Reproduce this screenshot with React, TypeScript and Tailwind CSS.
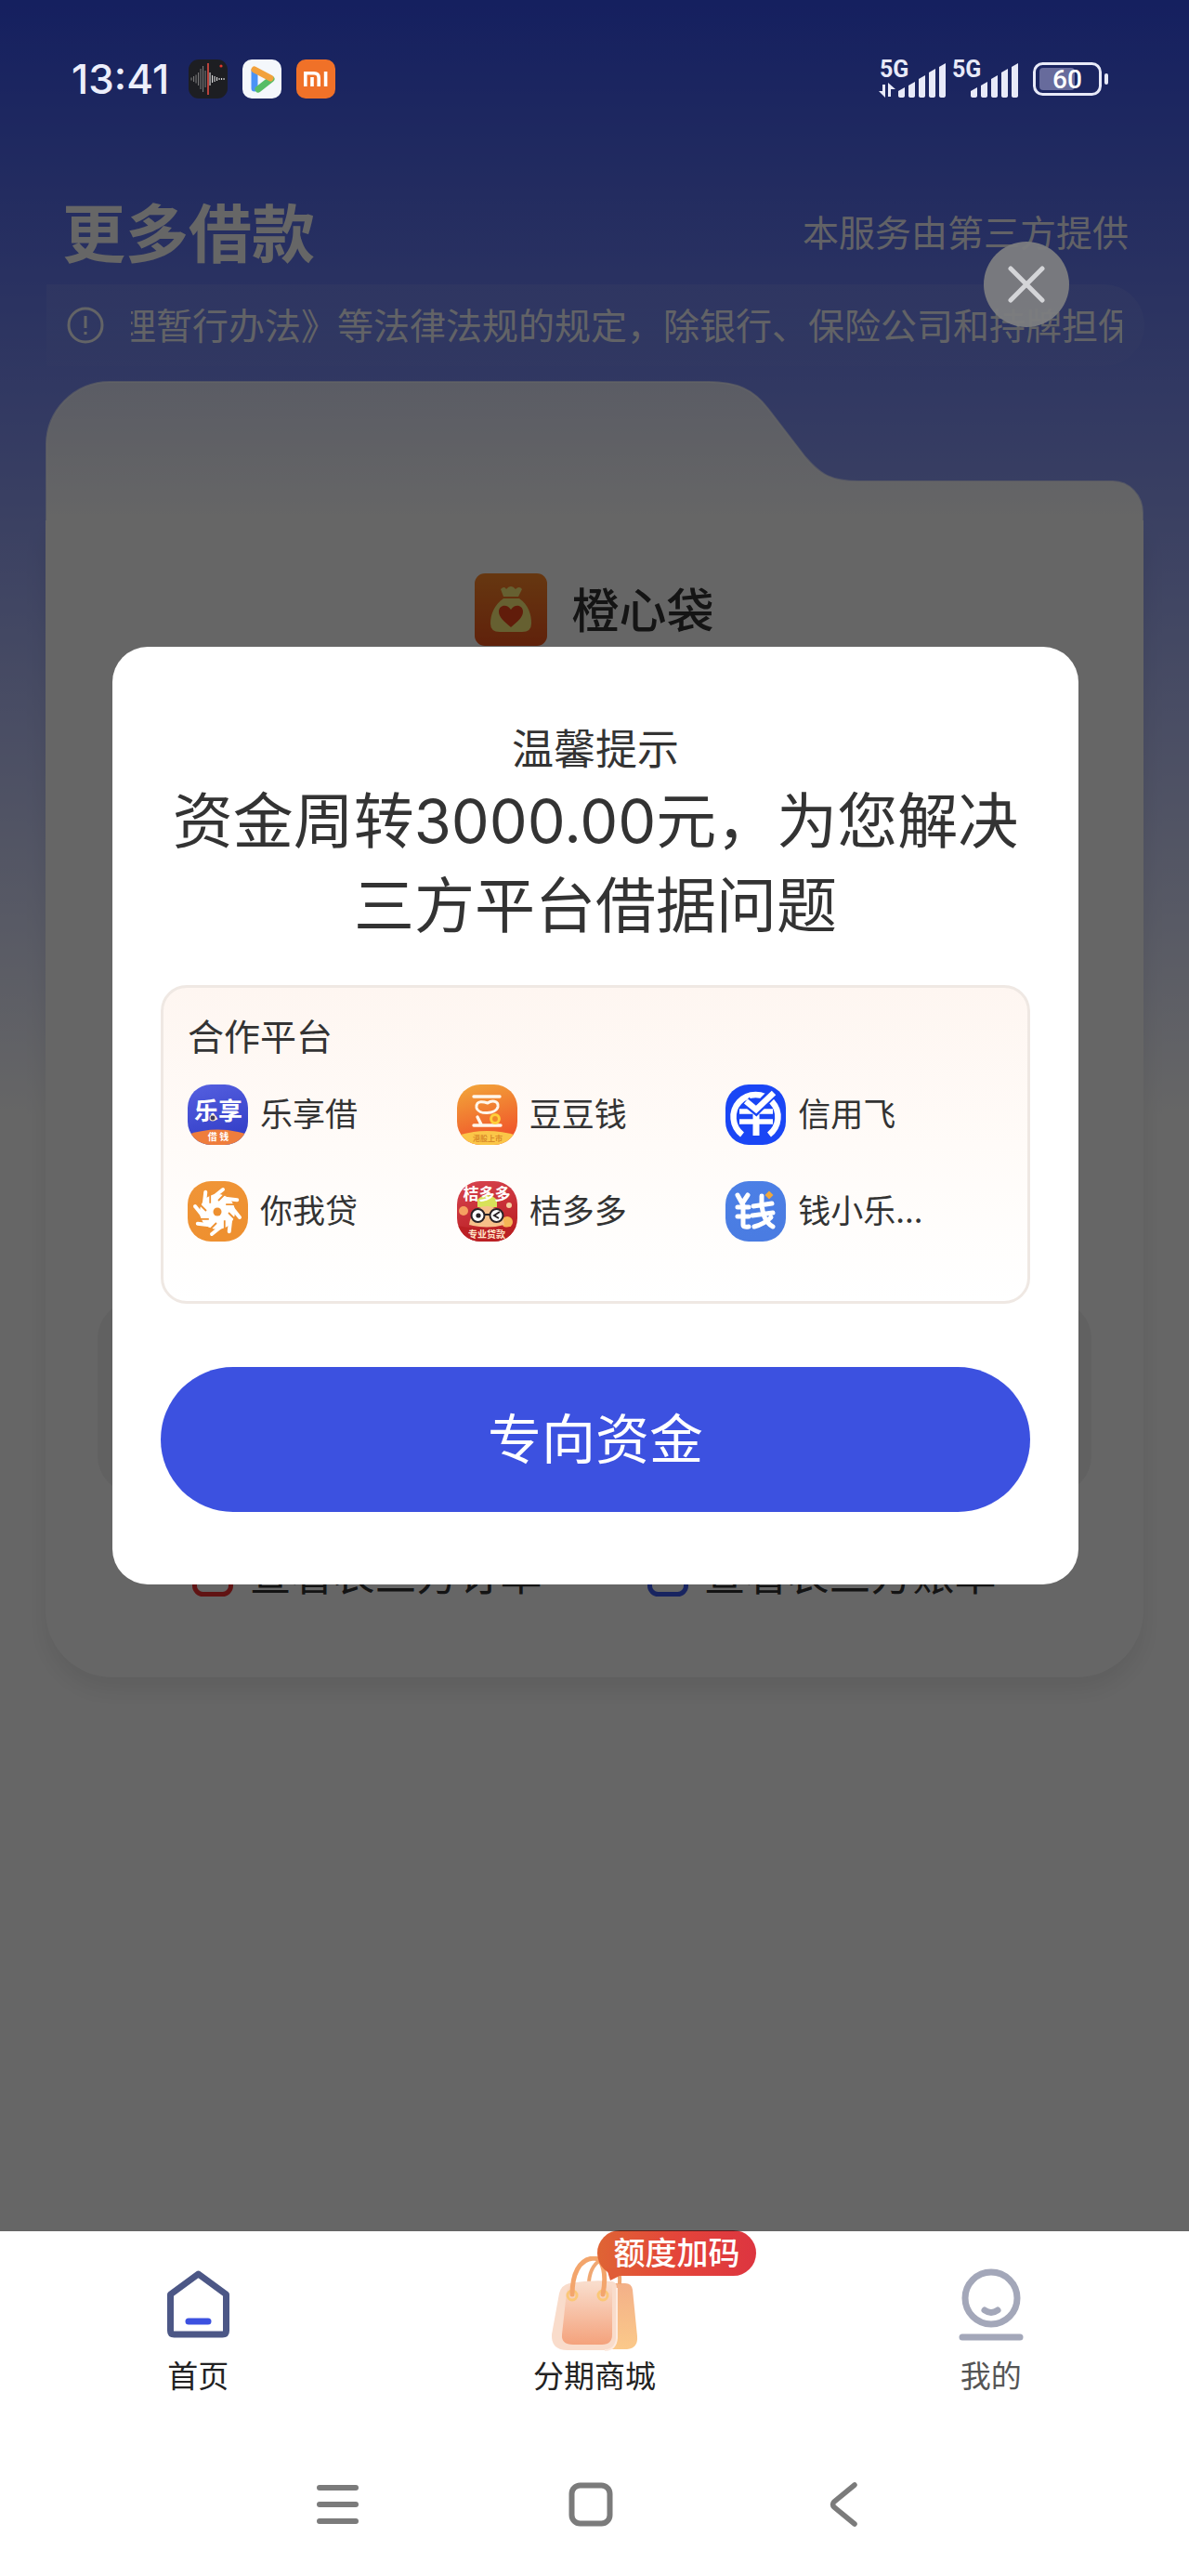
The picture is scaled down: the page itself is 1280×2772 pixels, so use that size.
import type { ReactNode } from "react";

const svgFont = "'Noto Sans CJK SC', sans-serif";

function RecorderIcon() {
  const bars = [3, 6, 9, 14, 22, 28, 18, 26, 14, 8, 6, 4, 2, 2, 2];
  return (
    <svg viewBox="0 0 42 42" className="size-[42px]">
      <rect width="42" height="42" rx="11" fill="#1d1e22" />
      {bars.map((h, i) => (
        <rect key={i} x={2.5 + i * 2.5} y={21 - h / 2} width="1.1" height={h} fill={i < 8 ? "#777" : "#ddd"} />
      ))}
      <rect x="20" y="4" width="2" height="34" fill="#b8423c" />
      <circle cx="35" cy="7" r="1.6" fill="#e0382e" />
    </svg>
  );
}

function PlayerIcon() {
  return (
    <svg viewBox="0 0 42 42" className="size-[42px]">
      <rect width="42" height="42" rx="10" fill="#f4f7fb" />
      <g fill="none" strokeWidth="7" strokeLinecap="round" strokeLinejoin="round">
        <path d="M13 31V12" stroke="#4a93f5" />
        <path d="M17 32L31 21" stroke="#57bd66" />
        <path d="M13 11L30 20" stroke="#f2a13c" />
      </g>
    </svg>
  );
}

function MiIcon() {
  return (
    <svg viewBox="0 0 42 42" className="size-[42px]">
      <rect width="42" height="42" rx="10" fill="#f07128" />
      <g fill="none" stroke="#fff" strokeWidth="3.6">
        <path d="M9.8 29V14.8H19Q24.2 14.8 24.2 20V29" />
        <path d="M17 19V29M31.6 13V29" />
      </g>
    </svg>
  );
}

function Signal({ data }: { data?: boolean }) {
  return (
    <svg viewBox="0 0 74 42" className="h-[42px] w-[74px] overflow-visible" fill="#e8eaf8">
      <text x="1" y="19" fontSize="25" fontWeight="700" fontFamily="Roboto, sans-serif">5G</text>
      {data && <path d="M4 27h3v14l-7-7h4zM10 40h3v-8h5l-8-7z" />}
      {[9, 15, 22, 29, 35].map((h, i) => (
        <path key={h} d={`M${21 + i * 11} 39V${43 - h}l7 -4V39q0 2-3 2h-1q-3 0-3-2z`} />
      ))}
    </svg>
  );
}

function Battery() {
  return (
    <svg viewBox="0 0 82 38" className="h-[38px] w-[82px]">
      <rect x="1.5" y="2.5" width="71" height="33" rx="9" fill="none" stroke="#e8eaf8" strokeWidth="3" />
      <rect x="7" y="7" width="38" height="24" rx="4" fill="#676b9c" />
      <rect x="77" y="13" width="4" height="12" rx="2" fill="#e8eaf8" />
      <text x="37" y="29" textAnchor="middle" fontSize="28" fontWeight="500" fill="#fff" fontFamily="Roboto, sans-serif">60</text>
    </svg>
  );
}

function StatusBar() {
  return (
    <div className="relative z-20 flex h-[170px] items-center justify-between pr-[86px] pl-[77px]">
      <div className="flex items-center gap-4">
        <span className="mr-[5px] font-['Inter','Noto_Sans_CJK_SC',sans-serif] text-[44px] leading-[50px] font-medium text-[#eceefb]">
          13:41
        </span>
        <RecorderIcon />
        <PlayerIcon />
        <MiIcon />
      </div>
      <div className="flex items-center">
        <Signal data />
        <span className="w-1" />
        <Signal />
        <span className="w-[14px]" />
        <Battery />
      </div>
    </div>
  );
}

function MoneyBag() {
  return (
    <svg viewBox="0 0 78 78" className="size-[78px]">
      <defs>
        <linearGradient id="bagBg" x1="0" y1="0" x2="0" y2="1">
          <stop offset="0" stopColor="#ff8a2a" />
          <stop offset="1" stopColor="#f0541c" />
        </linearGradient>
      </defs>
      <rect width="78" height="78" rx="11" fill="url(#bagBg)" />
      <path d="M28 17q4-4 6 0q5-6 10 0q4-4 7 0l-4 8H31z" fill="#fff07a" />
      <path d="M31 27H48C58 34 61 44 61 54Q61 63 51 63H27Q17 63 17 54C17 44 21 34 31 27z" fill="#fff07a" />
      <path d="M39 58C31 51 26 47 26 41C26 34 35 32 39 39C43 32 52 34 52 41C52 47 47 51 39 58z" fill="#f2461a" />
    </svg>
  );
}

function DocIcon({ className }: { className: string }) {
  return (
    <svg viewBox="0 0 44 50" className={`h-[50px] w-[44px] ${className}`} fill="none" stroke="currentColor" strokeWidth="5">
      <rect x="2.5" y="2.5" width="39" height="45" rx="9" />
      <path d="M13 17h18M13 28h12" />
    </svg>
  );
}

function LoanCard() {
  return (
    <section className="mx-[49px] mt-4">
      <svg viewBox="0 0 1182 150" preserveAspectRatio="none" className="block h-[150px] w-full">
        <defs>
          <linearGradient id="tabFill" x1="0" y1="0" x2="0" y2="1">
            <stop offset="0" stopColor="#e2e6fb" />
            <stop offset="1" stopColor="#ffffff" />
          </linearGradient>
        </defs>
        <path
          d="M1 150V70A68 68 0 0 1 69 1H714C744 1 762 9 778 30L818 82C834 101 846 108 876 108H1149A32 34 0 0 1 1181 142V150"
          fill="url(#tabFill)"
          stroke="#fff"
          strokeOpacity=".6"
          strokeWidth="2"
        />
      </svg>
      <div className="rounded-b-[72px] bg-white px-14 pt-[57px] pb-[82px] shadow-[0_14px_24px_rgba(0,0,0,0.08)]">
        <div className="flex items-center justify-center gap-[26px]">
          <MoneyBag />
          <h2 className="pb-1 text-[51px] leading-[74px] font-medium text-[#333]">橙心袋</h2>
        </div>
        <div className="mt-[705px] h-[207px] rounded-[40px] bg-[#f3f3f3]" />
        <div className="mt-14 flex justify-center gap-[113px]">
          <a href="#orders" className="flex items-center gap-[17px] text-[45px] leading-[60px] text-[#333]">
            <DocIcon className="text-[#f03030]" />
            查看表三方订单
          </a>
          <a href="#bills" className="flex items-center gap-[17px] text-[45px] leading-[60px] text-[#333]">
            <DocIcon className="text-[#3d5bf0]" />
            查看表三方账单
          </a>
        </div>
      </div>
    </section>
  );
}

function LogoFrame({ id, from, to, children }: { id: string; from: string; to: string; children: ReactNode }) {
  return (
    <svg viewBox="0 0 65 65" className="size-[65px] shrink-0">
      <defs>
        <linearGradient id={`${id}Bg`} x1="0" y1="0" x2="0.3" y2="1">
          <stop offset="0" stopColor={from} />
          <stop offset="1" stopColor={to} />
        </linearGradient>
        <clipPath id={`${id}Clip`}>
          <rect width="65" height="65" rx="25" />
        </clipPath>
      </defs>
      <g clipPath={`url(#${id}Clip)`} fontFamily={svgFont}>
        <rect width="65" height="65" fill={`url(#${id}Bg)`} />
        {children}
      </g>
    </svg>
  );
}

const partners: { name: string; logo: ReactNode }[] = [
  {
    name: "乐享借",
    logo: (
      <LogoFrame id="lexiang" from="#5560e0" to="#343fc8">
        <text x="33" y="38" textAnchor="middle" fontSize="26" fontWeight="700" fill="#fff">乐享</text>
        <circle cx="27" cy="36" r="3" fill="#3a3a60" stroke="#e8d8c0" strokeWidth="1.2" />
        <path d="M0 54Q32 43 65 54V65H0z" fill="#ef7d3c" />
        <text x="33" y="60" textAnchor="middle" fontSize="10" fontWeight="700" fill="#fff">借 钱</text>
      </LogoFrame>
    ),
  },
  {
    name: "豆豆钱",
    logo: (
      <LogoFrame id="doudou" from="#f2a83a" to="#f0562a">
        <g fill="none" stroke="#fff6ea" strokeWidth="3.4" strokeLinecap="round" strokeLinejoin="round">
          <path d="M18 13H46M18 44H47M22 35L26 43" />
          <path d="M21 25C20 16 30 19 33 20C37 17 45 17 44 24C42 32 23 33 21 25z" strokeWidth="3" />
        </g>
        <circle cx="41" cy="37" r="4.4" fill="#f08a2a" stroke="#ffcf3a" strokeWidth="3" />
        <path d="M0 55Q32 45 65 55V65H0z" fill="#fbc648" />
        <text x="33" y="61" textAnchor="middle" fontSize="8" fontWeight="700" fill="#d98a2a">港股上市</text>
      </LogoFrame>
    ),
  },
  {
    name: "信用飞",
    logo: (
      <LogoFrame id="xinyong" from="#1a46f5" to="#1a46f5">
        <path d="M18 54A24 24 0 1 1 47 54" fill="none" stroke="#fff" strokeWidth="6.5" />
        <g stroke="#fff" strokeWidth="5.6" fill="none">
          <path d="M15 29H51M15 40H51" />
          <path d="M33 30V55" strokeWidth="7" />
        </g>
        <path d="M22 18L33 27L51 9" fill="none" stroke="#1a46f5" strokeWidth="11" />
        <path d="M22 18L33 27L52 9" fill="none" stroke="#fff" strokeWidth="6.5" />
      </LogoFrame>
    ),
  },
  {
    name: "你我贷",
    logo: (
      <LogoFrame id="niwo" from="#f09537" to="#ee9030">
        <circle cx="32" cy="33" r="19" fill="#fff" />
        {[0, 45, 90, 135, 180, 225, 270, 315].map((deg) => (
          <g key={deg} transform={`rotate(${deg} 32 33)`}>
            <path d="M28 17L38 9" stroke="#fff" strokeWidth="4" strokeLinecap="round" />
            <path d="M33 21L42 12" stroke="#ee9030" strokeWidth="1.8" />
          </g>
        ))}
        <circle cx="32" cy="33" r="4.5" fill="#ee9030" />
      </LogoFrame>
    ),
  },
  {
    name: "桔多多",
    logo: (
      <LogoFrame id="judd" from="#d84450" to="#bb2024">
        <path d="M22 20Q32 10 43 20V28H22z" fill="#d8e25a" />
        <circle cx="7" cy="32" r="5" fill="#f5a060" />
        <circle cx="54" cy="44" r="6" fill="#f5b455" />
        <circle cx="56" cy="26" r="3" fill="#f5d0a0" />
        <path d="M13 47Q16 27 32 27Q48 27 51 47Q32 52 13 47z" fill="#f7c08a" />
        <text x="32" y="20" textAnchor="middle" fontSize="17" fontWeight="700" fill="#fff">桔多多</text>
        <g fill="#fff" stroke="#2a2226" strokeWidth="2">
          <circle cx="22.500" cy="37" r="7" />
          <circle cx="42.500" cy="37" r="7" />
          <path d="M29 36H36" />
          <path d="M46 33L40 37L45 40" fill="none" />
        </g>
        <circle cx="23" cy="37" r="2.6" fill="#2a2226" />
        <path d="M0 48Q32 54 65 48V65H0z" fill="#bb2024" />
        <text x="32" y="61" textAnchor="middle" fontSize="10" fontWeight="700" fill="#ffe6c8">专业贷款</text>
      </LogoFrame>
    ),
  },
  {
    name: "钱小乐...",
    logo: (
      <LogoFrame id="qianxl" from="#4c80e6" to="#4a7ce2">
        <g fill="none" stroke="#fff" strokeWidth="5" strokeLinecap="round" strokeLinejoin="round">
          <path d="M13 15L18 24L24 15M13 28H25M13 38H25M19 26V47Q19 50 25 49" />
          <path d="M30 27L50 24M29 37L51 34M39 16Q38 42 51 49M49 39Q42 46 31 49" />
        </g>
        <path d="M47 10.500L51.500 15L47 19.500L42.500 15z" fill="#f0a83c" />
      </LogoFrame>
    ),
  },
];

function PromoDialog() {
  return (
    <div
      role="dialog"
      aria-labelledby="promo-title"
      className="mr-[119px] ml-[121px] flex-1 rounded-[38px] bg-white px-[52px] pt-[82px] pb-[78px] text-[#333]"
    >
      <h2 id="promo-title" className="text-center text-[45px] leading-[52px]">温馨提示</h2>
      <p className="mt-2 text-center font-['Inter','Noto_Sans_CJK_SC',sans-serif] text-[65px] leading-[91px]">
        资金周转3000.00元，为您解决
        <br />
        三方平台借据问题
      </p>
      <div className="mt-10 rounded-[28px] border-[3px] border-[#efe8e3] bg-linear-to-b/srgb from-[#fef6f1] via-[#fffbf8] to-white pt-6 pr-[35px] pb-16 pl-[26px]">
        <h3 className="text-[39px] leading-[52px]">合作平台</h3>
        <ul className="mt-7 grid grid-cols-3 gap-y-[39px]">
          {partners.map((p) => (
            <li key={p.name} className="flex items-center gap-[13px]">
              {p.logo}
              <span className="pb-[5px] text-[35px] leading-[52px]">{p.name}</span>
            </li>
          ))}
        </ul>
      </div>
      <button type="button" className="mt-[68px] h-[156px] w-full rounded-full bg-[#3c51e0] pb-[7px] text-[58px] text-white">
        专向资金
      </button>
    </div>
  );
}

function HomeIcon() {
  return (
    <svg viewBox="0 0 67 73" className="h-[73px] w-[67px]" fill="none" strokeLinecap="round" strokeLinejoin="round">
      <path d="M3.500 26L33.500 4L63.500 26V65Q63.500 69 59.500 69H7.500Q3.500 69 3.500 65z" stroke="#4c5786" strokeWidth="7" />
      <path d="M23 55H44" stroke="#3c51e0" strokeWidth="7" />
    </svg>
  );
}

function BagIcon() {
  return (
    <svg viewBox="0 0 94 103" className="h-[103px] w-[94px]">
      <defs>
        <linearGradient id="bagFront" x1="0" y1="0" x2="0" y2="1">
          <stop offset="0" stopColor="#f9dccb" />
          <stop offset="1" stopColor="#f4a27c" />
        </linearGradient>
        <linearGradient id="bagBack" x1="0" y1="0" x2="0" y2="1">
          <stop offset="0" stopColor="#f3b088" />
          <stop offset="1" stopColor="#fbc98a" />
        </linearGradient>
      </defs>
      <path d="M62 29H80Q87 29 88 36L93 86Q94 99 82 100H55z" fill="url(#bagBack)" />
      <path d="M41 27Q43 8 56 3M74 30Q75 18 71 10" fill="none" stroke="#f0a873" strokeWidth="4" />
      <path d="M20 29Q44 25 66 27Q71 28 71 34V88Q70 101 58 101H18Q0 101 1 84L9 40Q11 31 20 29z" fill="#f9dccb" />
      <path d="M22 31Q44 28 66 31V84Q66 95 55 95H24Q11 95 12 84L17 38Q18 32 22 31z" fill="url(#bagFront)" />
      <path d="M58 101Q70 101 71 88V34" fill="none" stroke="#fdeadf" strokeWidth="2" />
      <g fill="none" stroke="#fbc777" strokeWidth="3">
        <circle cx="23" cy="42" r="5" />
        <circle cx="56" cy="42" r="5" />
      </g>
      <path d="M23 41C23 20 30 3 46 2C57 2 60 20 56 41" fill="none" stroke="#f3a56c" strokeWidth="5" strokeLinecap="round" />
    </svg>
  );
}

function MeIcon() {
  return (
    <svg viewBox="0 0 70 78" className="h-[78px] w-[70px]" fill="none" stroke="#a3a7b9" strokeWidth="7" strokeLinecap="round">
      <circle cx="35" cy="32" r="28" />
      <path d="M28 45Q35 50 42 45" />
      <path d="M4 74H66" />
    </svg>
  );
}

function TabItem({ href, label, muted, children }: { href: string; label: string; muted?: boolean; children: ReactNode }) {
  return (
    <a href={href} className="flex flex-col items-center pt-[27px]">
      <span className="relative flex h-[103px] items-center">{children}</span>
      <span className={`mt-1 text-[33px] leading-[40px] ${muted ? "text-[#555]" : "text-[#222]"}`}>{label}</span>
    </a>
  );
}

function TabBar() {
  return (
    <nav className="grid grid-cols-3 bg-white pb-[43px]">
      <TabItem href="#home" label="首页">
        <HomeIcon />
      </TabItem>
      <TabItem href="#mall" label="分期商城">
        <BagIcon />
        <span className="absolute -top-7 left-[50px] flex h-[49px] w-[171px] items-center justify-center rounded-full bg-linear-to-r/srgb from-[#df6434] via-[#e4453a] to-[#dd3540] pb-[5px] text-[34px] font-medium whitespace-nowrap text-white">
          额度加码
          <svg viewBox="0 0 16 14" className="absolute top-[41px] left-[10px] h-[14px] w-4">
            <path d="M0 0H16V7L4 13z" fill="#e05c37" />
          </svg>
        </span>
      </TabItem>
      <TabItem href="#me" label="我的" muted>
        <MeIcon />
      </TabItem>
    </nav>
  );
}

function SystemNav() {
  return (
    <div className="flex h-[154px] items-center justify-center gap-[224px] bg-white pr-2">
      <button type="button" aria-label="菜单">
        <svg viewBox="0 0 48 48" className="size-12" stroke="#7b7b7b" strokeWidth="6" strokeLinecap="round">
          <path d="M4 6H43M4 24H43M4 42H43" />
        </svg>
      </button>
      <button type="button" aria-label="主屏幕">
        <svg viewBox="0 0 48 48" className="size-12" fill="none" stroke="#7b7b7b" strokeWidth="6">
          <rect x="3.500" y="3.500" width="41" height="41" rx="9" />
        </svg>
      </button>
      <button type="button" aria-label="返回">
        <svg viewBox="0 0 48 48" className="size-12" fill="none" stroke="#7b7b7b" strokeWidth="5.500" strokeLinecap="round">
          <path d="M36 3L14 21Q11 24 14 27L36 45" />
        </svg>
      </button>
    </div>
  );
}

export default function App() {
  return (
    <div className="flex min-h-screen flex-col bg-white font-['Noto_Sans_CJK_SC','Inter',sans-serif]">
      <main className="relative flex-1 bg-linear-to-b/srgb from-[#3550ee] to-white to-[1200px] pb-[596px]">
        <StatusBar />
        <header className="flex items-center justify-between pt-10 pr-[65px] pl-[67px] text-white">
          <h1 className="text-[68px] leading-[76px] font-bold">更多借款</h1>
          <span className="text-[39px] leading-[76px] text-white/95">本服务由第三方提供</span>
        </header>
        <div className="mr-[48px] ml-[50px] mt-5 flex h-[88px] items-center rounded-r-[44px] bg-linear-to-b from-white/8 to-white/2 pr-[24px] pl-[22px] text-white/95">
          <svg viewBox="0 0 40 40" className="size-10 shrink-0" fill="none" stroke="currentColor" strokeWidth="3">
            <circle cx="20" cy="20" r="18" />
            <path d="M20 10V23M20 27V30" />
          </svg>
          <div className="ml-[29px] min-w-0 flex-1 overflow-hidden pb-1">
            <p className="-ml-3 text-[39px] leading-[56px] whitespace-nowrap">
              理暂行办法》等法律法规的规定，除银行、保险公司和持牌担保
            </p>
          </div>
        </div>
        <LoanCard />

        <div className="absolute inset-0 z-10 flex items-center bg-black/60">
          <PromoDialog />
          <button
            type="button"
            aria-label="关闭"
            className="absolute top-[260px] right-[129px] flex size-[92px] items-center justify-center rounded-full bg-[#7c7d80]/95"
          >
            <svg viewBox="0 0 40 40" className="size-10" stroke="#d4d5d8" strokeWidth="5" strokeLinecap="round">
              <path d="M3 3L37 37M37 3L3 37" />
            </svg>
          </button>
        </div>
      </main>
      <TabBar />
      <SystemNav />
    </div>
  );
}
